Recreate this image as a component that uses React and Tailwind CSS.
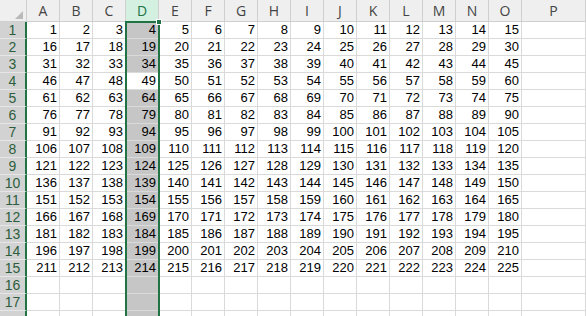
const COLS = 'ABCDEFGHIJKLMNO'.split('')
const ROWS = Array.from({ length: 18 }, (_, i) => i + 1)

function Corner() {
  return (
    <div className="relative bg-[#efefef] border-r border-b border-[#cfcfcf]">
      <svg className="absolute left-[15px] top-[11px]" width="8" height="8" viewBox="0 0 8 8">
        <polygon points="8,0 8,8 0,8" fill="#b9b9b9" />
      </svg>
    </div>
  )
}

export default function App() {
  return (
    <div className="relative w-[586px] h-[316px] overflow-hidden bg-white font-['Liberation_Sans',Arial,sans-serif] text-[13px] leading-[16px] text-black">
      <div className="grid grid-cols-[27px_repeat(15,33px)_64px_1fr] grid-rows-[22px_repeat(18,17px)]">
        <Corner />
        {COLS.map(c => (
          <div
            key={c}
            className={`flex items-center justify-center border-r border-b text-[14px] leading-[20px] font-['Open_Sans',sans-serif] ${
              c === 'D'
                ? 'bg-[#d3f0e0] text-[#217346] border-[#cfcfcf]'
                : 'bg-[#efefef] text-[#444] border-[#cfcfcf]'
            }`}
          >
            {c}
          </div>
        ))}
        <div className="flex items-center justify-center bg-[#efefef] border-r border-b border-[#cfcfcf] text-[14px] leading-[20px] text-[#444] font-['Open_Sans',sans-serif]">P</div>
        <div className="bg-[#efefef] border-b border-[#cfcfcf]" />

        {ROWS.map(r => (
          <Row key={r} r={r} />
        ))}
      </div>

      {/* selection of column D */}
      <div className="absolute left-[125px] top-[21px] w-[35px] h-[300px] border-2 border-[#217346]" />
      <div className="absolute left-[156px] top-[19px] w-[6px] h-[6px] bg-[#217346] border border-white" />
    </div>
  )
}

function Row({ r }) {
  return (
    <>
      <div className="flex items-center justify-center bg-[#d2d2d2] border-b border-[#e6e6e6] border-r-2 border-r-[#217346] text-[14px] leading-[16px] text-[#2d5d3c]">
        {r <= 17 ? r : ''}
      </div>
      {COLS.map((c, i) => {
        const val = r <= 15 ? (r - 1) * 15 + i + 1 : ''
        const sel = c === 'D' && r !== 4
        return (
          <div
            key={c}
            className={`flex items-center justify-end pr-[2px] border-r border-b border-[#dadada] ${sel ? 'bg-[#c6c6c6]' : 'bg-white'}`}
          >
            {val}
          </div>
        )
      })}
      <div className="border-r border-b border-[#dadada]" />
      <div className="border-b border-[#dadada]" />
    </>
  )
}
